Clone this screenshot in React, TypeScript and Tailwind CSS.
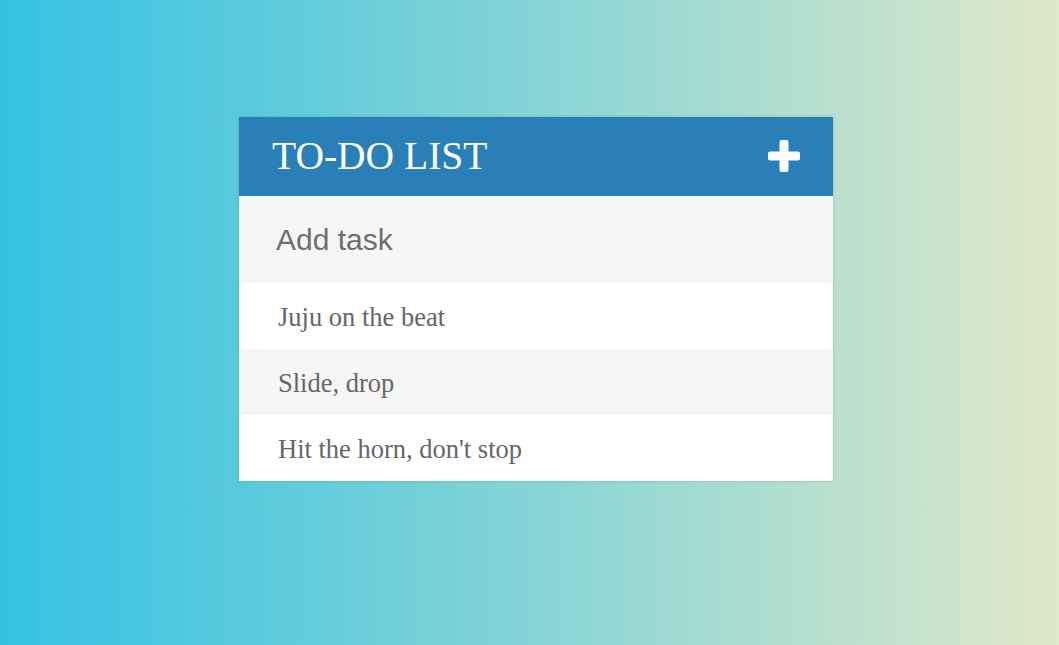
const tasks = ["Juju on the beat", "Slide, drop", "Hit the horn, don't stop"];

export default function App() {
  return (
    <div className="min-h-screen w-full bg-[linear-gradient(to_right,#33c2e3,#85d4d6_50%,#e0e9c9)] pt-[117px]">
      <div className="ml-[239px] w-[594px] bg-white shadow-[0_0_3px_rgba(0,0,0,0.15)]">
        {/* Header */}
        <div className="flex h-[79px] items-center justify-between bg-[#2980b9] pl-[33px] pr-[33px]">
          <h1 className="text-[39.5px] font-normal leading-none text-white [font-family:'Liberation_Serif',serif]">
            TO-DO LIST
          </h1>
          <svg width="32" height="32" viewBox="0 0 32 32" className="mb-[2px]">
            <rect x="11.5" y="0" width="9" height="32" rx="2" fill="white" />
            <rect x="0" y="11.5" width="32" height="9" rx="2" fill="white" />
          </svg>
        </div>

        {/* Input */}
        <div className="flex h-[87px] items-center bg-[#f6f6f6] pl-[37px] pb-[1px]">
          <input
            placeholder="Add task"
            className="w-full bg-transparent text-[30px] text-[#666] outline-none placeholder:text-[#6e6e6e] [font-family:'Liberation_Sans',sans-serif]"
          />
        </div>

        {/* List */}
        <ul>
          {tasks.map((t, i) => (
            <li
              key={t}
              className={`flex h-[66px] items-center pl-[39px] pt-[4px] text-[26.5px] text-[#666] [font-family:'Liberation_Serif',serif] ${
                i % 2 === 1 ? "bg-[#f6f6f6]" : "bg-white"
              }`}
            >
              {t}
            </li>
          ))}
        </ul>
      </div>
    </div>
  );
}
